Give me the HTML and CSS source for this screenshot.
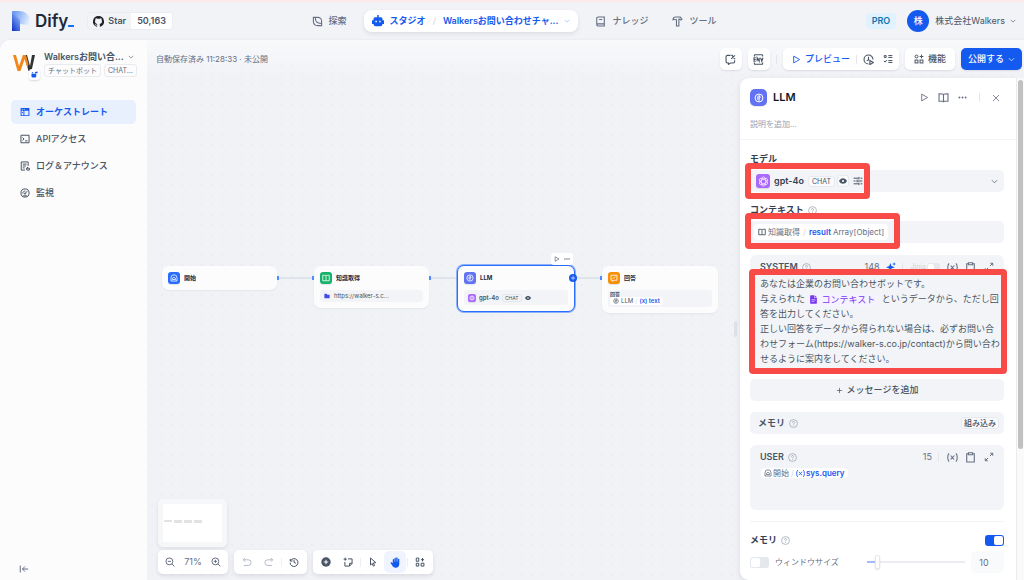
FILE: index.html
```html
<!DOCTYPE html>
<html lang="ja">
<head>
<meta charset="utf-8">
<meta name="viewport" content="width=device-width, initial-scale=1">
<title>Dify - ワークフロー</title>
<link rel="stylesheet" href="styles.css">
</head>
<body>
<svg class="sprite" aria-hidden="true">
  <defs>
    <linearGradient id="logo-a" x1="0" y1="1" x2="0.6" y2="0"><stop offset="0" stop-color="#0a2fc9"/><stop offset="1" stop-color="#8fb8f8"/></linearGradient>
    <linearGradient id="logo-b" x1="0" y1="0" x2="1" y2="0.4"><stop offset="0" stop-color="#5c8df2"/><stop offset="1" stop-color="#e3effc"/></linearGradient>
  </defs>
  <symbol id="i-chevron" viewBox="0 0 16 16"><path d="M2 5l6 6 6-6"/></symbol>
  <symbol id="i-explore" viewBox="0 0 16 16"><path d="M2 8V2h6.500A5.500 5.500 0 0 1 14 7.500V14H8.500A6.500 6.500 0 0 1 2 8zM5 2.500c-.5 5 2 8.500 8.500 8.500"/></symbol>
  <symbol id="i-robot" viewBox="0 0 16 16"><path fill="currentColor" stroke="none" fill-rule="evenodd" d="M7 0h2v3h3a2 2 0 0 1 2 2v2h2v5h-2a3 3 0 0 1-3 3H5a3 3 0 0 1-3-3H0V7h2V5a2 2 0 0 1 2-2h3zM4.500 7.500v2h2v-2zm5 0v2h2v-2z"/></symbol>
  <symbol id="i-mascot" viewBox="0 0 16 16"><path fill="currentColor" stroke="none" d="M1 6h11v6a3 3 0 0 1-3 3H4a3 3 0 0 1-3-3zM9 2l6-1v4H9zM2 3h3v2H2z"/></symbol>
  <symbol id="i-book" viewBox="0 0 16 16"><path d="M13.500 11.500V1.500h-9a2 2 0 0 0-2 2v9a2 2 0 0 0 2 2h9v-3h-9a2 2 0 0 0-2 1.500M6 5h4.500"/></symbol>
  <symbol id="i-hammer" viewBox="0 0 16 16"><path d="M1.500 5.500c0-2.500 1.500-4 4-4H12l2.500 3-1.500 1.500-2-1.500H10v10H6.500v-9c-1.500-.5-3.500-.5-5 0z"/></symbol>
  <symbol id="i-orchestrate" viewBox="0 0 16 16"><path fill="currentColor" stroke="none" fill-rule="evenodd" d="M1 1.500h14v13H1zm1.500 4.500v7h3v-7zm4.500 0v7h6.500v-7zM3 3v1.300h1.500V3zm3 0v1.300h1.500V3z"/><path d="M3 9h2"/></symbol>
  <symbol id="i-terminal" viewBox="0 0 16 16"><path d="M1.500 2h13v12h-13zM4 5.500L6.500 8 4 10.500M8 11h4"/></symbol>
  <symbol id="i-log" viewBox="0 0 16 16"><path d="M13 8V1.500H2v13h6M4.500 5h6M4.500 8h5M4.500 11h3M10 11.500h5v3h-4zM12 9.500v2"/></symbol>
  <symbol id="i-gauge" viewBox="0 0 16 16"><circle cx="8" cy="8" r="6.500"/><path d="M8 9l3.500-4M4.500 9a3.500 3.500 0 0 1 4-4M5 12.500h6"/><circle cx="8" cy="9" r="1"/></symbol>
  <symbol id="i-play" viewBox="0 0 16 16"><path d="M3 2l10.500 6L3 14z"/></symbol>
  <symbol id="i-chat-x" viewBox="0 0 16 16"><path d="M8 2H3.500a2 2 0 0 0-2 2v7a2 2 0 0 0 2 2H5v2l3-2h4a2 2 0 0 0 2-2V9M9 2h1.500l3 5H15M14.500 2L9 7"/></symbol>
  <symbol id="i-env" viewBox="0 0 16 16"><path d="M2 3.500V2a1 1 0 0 1 1-1h10a1 1 0 0 1 1 1v1.500M2 12.500V14a1 1 0 0 0 1 1h10a1 1 0 0 0 1-1v-1.500M4 5.500H1.500v5H4M1.500 8H4M6 10.500v-5l3 5v-5M11 5.500l1.800 5 1.700-5"/></symbol>
  <symbol id="i-runs" viewBox="0 0 16 16"><path d="M14.500 8A6.500 6.500 0 1 0 8 14.500M8 4v4.500L5.500 10M10 9.500l5 3-5 3z"/></symbol>
  <symbol id="i-checklist" viewBox="0 0 16 16"><path d="M2 2.500h3v3H2zM8.500 2.500H15M8.500 5.500H15M1.500 11l1.800 2L6 9.500M8.500 10.500H15M8.500 13.500H15"/></symbol>
  <symbol id="i-features" viewBox="0 0 16 16"><circle cx="4" cy="4" r="2.300"/><rect x="1.700" y="9.700" width="4.600" height="4.600"/><rect x="9.700" y="9.700" width="4.600" height="4.600"/><path d="M12 1v6M9 4h6"/></symbol>
  <symbol id="i-brain" viewBox="0 0 16 16"><circle cx="8" cy="8" r="6.300"/><path d="M8 3v10M6 5.500v5M8 5.500c3-.5 3 2.500 0 3"/></symbol>
  <symbol id="i-home" viewBox="0 0 16 16"><path d="M2 7.500a6 6 0 0 1 12 0V14H2zM5 11V8.500l3-2 3 2V11z"/></symbol>
  <symbol id="i-open-book" viewBox="0 0 16 16"><path d="M8 3.500c-1-1-2-1-6.500-1v11H7l1 .8 1-.8h5.500v-11C10 2.500 9 2.500 8 3.500zM8 3.500v10"/></symbol>
  <symbol id="i-answer" viewBox="0 0 16 16"><path d="M2 2.500h12v10H9l-4 2v-2H2zM5.500 10l5-5"/></symbol>
  <symbol id="i-dots" viewBox="0 0 16 16"><g fill="currentColor" stroke="none"><circle cx="2.500" cy="8" r="1.700"/><circle cx="8" cy="8" r="1.700"/><circle cx="13.500" cy="8" r="1.700"/></g></symbol>
  <symbol id="i-close" viewBox="0 0 16 16"><path d="M2 2l12 12M14 2L2 14"/></symbol>
  <symbol id="i-openai" viewBox="0 0 16 16"><g stroke-width="1"><ellipse cx="8" cy="8" rx="3.200" ry="6.700"/><ellipse cx="8" cy="8" rx="3.200" ry="6.700" transform="rotate(60 8 8)"/><ellipse cx="8" cy="8" rx="3.200" ry="6.700" transform="rotate(120 8 8)"/></g></symbol>
  <symbol id="i-eye" viewBox="0 0 16 16"><path fill="currentColor" stroke="none" fill-rule="evenodd" d="M0 8c2-4 5-5.500 8-5.500S14 4 16 8c-2 4-5 5.500-8 5.500S2 12 0 8zm8-2.200a2.200 2.200 0 1 0 0 4.400 2.200 2.200 0 0 0 0-4.400z"/></symbol>
  <symbol id="i-sliders" viewBox="0 0 16 16"><path d="M1 3.500h8M12 3.500h3M9.500 1.500v4M1 8h3M7 8h8M6.500 6v4M1 12.500h8M12 12.500h3M9.500 10.500v4"/></symbol>
  <symbol id="i-help" viewBox="0 0 16 16"><circle cx="8" cy="8" r="7"/><path d="M6 6.500a2 2 0 1 1 3 1.600c-.7.400-1 .7-1 1.400M8 11v1.200"/></symbol>
  <symbol id="i-sparkle" viewBox="0 0 16 16"><path fill="currentColor" stroke="none" d="M7 1.500l1.800 4.700L14 8.500l-5.200 1.800L7 15.500l-1.800-5.200L0 8.500l5.200-2.300zM13 0l.8 2.200L16 3l-2.200.8L13 6l-.8-2.200L10 3l2.200-.8z"/></symbol>
  <symbol id="i-var" viewBox="0 0 16 16"><path d="M3 2C.5 4.500.5 11.500 3 14M13 2c2.500 2.500 2.500 9.500 0 12M5 5.500c2.500 0 3 5 5.500 5M11 5.500c-2.500 0-3.500 5-6 5"/></symbol>
  <symbol id="i-clipboard" viewBox="0 0 16 16"><path d="M5 2.500H2.500v12h11v-12H11M5 1h6v3H5z"/></symbol>
  <symbol id="i-expand" viewBox="0 0 16 16"><path d="M9.500 6.500L14 2M10 2h4v4M6.500 9.500L2 14M2 10v4h4"/></symbol>
  <symbol id="i-file" viewBox="0 0 16 16"><path fill="currentColor" stroke="none" fill-rule="evenodd" d="M2 2a1.500 1.500 0 0 1 1.500-1.500H9V5h5v9a1.500 1.500 0 0 1-1.500 1.500h-9A1.500 1.500 0 0 1 2 14zm2.500 6v1.200h7V8zm0 3v1.200h5V11zM10 .5L14 4h-4z"/></symbol>
  <symbol id="i-folder" viewBox="0 0 16 16"><path fill="currentColor" stroke="none" d="M1 3a1 1 0 0 1 1-1h5l2 2.500h5a1 1 0 0 1 1 1V13a1 1 0 0 1-1 1H2a1 1 0 0 1-1-1z"/></symbol>
  <symbol id="i-zoom-out" viewBox="0 0 16 16"><circle cx="7" cy="7" r="5.500"/><path d="M11 11l4 4M4.500 7h5"/></symbol>
  <symbol id="i-zoom-in" viewBox="0 0 16 16"><circle cx="7" cy="7" r="5.500"/><path d="M11 11l4 4M4.500 7h5M7 4.500v5"/></symbol>
  <symbol id="i-undo" viewBox="0 0 16 16"><path d="M5 1.500L2 4.500l3 3M2 4.500h8a4.500 4.500 0 0 1 0 9H3"/></symbol>
  <symbol id="i-redo" viewBox="0 0 16 16"><path d="M11 1.500l3 3-3 3M14 4.500H6a4.500 4.500 0 0 0 0 9h7"/></symbol>
  <symbol id="i-history" viewBox="0 0 16 16"><path d="M2 3v3.500h3.500M2.300 6.200A6.300 6.300 0 1 1 1.700 9M8 4.500v4l3 1.500"/></symbol>
  <symbol id="i-add" viewBox="0 0 16 16"><circle cx="8" cy="8" r="7.500" fill="currentColor" stroke="none"/><path stroke="#fff" d="M8 4.500v7M4.500 8h7"/></symbol>
  <symbol id="i-note" viewBox="0 0 16 16"><path d="M8 3h6.500v7.500l-4 4H3V8M14.500 10h-4v4.500M3.500 1v5M1 3.500h5"/></symbol>
  <symbol id="i-pointer" viewBox="0 0 16 16"><path d="M4 1.500l8.500 7.500-4 .5 2 4.200-2 .8-1.900-4.200L4 13z"/></symbol>
  <symbol id="i-hand" viewBox="0 0 16 16"><path fill="currentColor" stroke="none" d="M4 9V4a1 1 0 0 1 2 0v3h.5V2a1 1 0 0 1 2 0v5H9V1.500a1 1 0 0 1 2 0V7h.5V3.500a1 1 0 0 1 2 0V10c0 3.500-2 5.500-5 5.500S4 14 3 12L1 9c-.5-1 .8-1.900 1.500-1.200z"/></symbol>
  <symbol id="i-organize" viewBox="0 0 16 16"><path d="M2 1.800h4v5H2zM2 10h4v4.500H2zM9.800 10h4.500v4.500H9.800zM12 1.500v5.500M9.500 4.300h5"/></symbol>
  <symbol id="i-collapse" viewBox="0 0 16 16"><path d="M2 2.500v11M14.500 8H5.500M9.500 4l-4 4 4 4"/></symbol>
  <symbol id="i-plus" viewBox="0 0 16 16"><path d="M8 2v12M2 8h12"/></symbol>
</svg>

<header class="topbar">
  <div class="brand-area">
    <a class="brand" href="#" aria-label="Dify">
      <svg class="brand-mark" viewBox="0 0 18 20"><path fill="url(#logo-b)" d="M0 0h8a10 10 0 0 1 0 20H8V10z"/><path fill="url(#logo-a)" d="M0 0l8 9v11H0z"/><path fill="#f1f3f7" d="M8 13l8 1-1 6H8z"/></svg>
      <span class="brand-name">Dify<span class="brand-cursor"></span></span>
    </a>
    <a class="github" href="#">
      <span class="github-star"><svg class="github-mark" viewBox="0 0 16 16"><path fill="currentColor" d="M8 0a8 8 0 0 0-2.500 15.600c.4.100.5-.2.500-.4v-1.400c-2.200.5-2.700-1-2.700-1-.4-.9-.9-1.200-.9-1.200-.7-.5.100-.5.100-.5.800.1 1.200.8 1.200.8.700 1.300 1.900.9 2.300.7.100-.5.300-.9.500-1.100-1.800-.2-3.600-.9-3.600-4 0-.9.300-1.600.8-2.100-.1-.2-.4-1 .1-2.100 0 0 .7-.2 2.200.8a7.500 7.500 0 0 1 4 0c1.500-1 2.200-.8 2.200-.8.400 1.100.2 1.900.1 2.100.5.600.8 1.300.8 2.100 0 3.100-1.900 3.800-3.700 4 .3.300.6.800.6 1.500v2.200c0 .2.100.5.500.4A8 8 0 0 0 8 0z"/></svg>Star</span><span class="github-count">50,163</span>
    </a>
  </div>
  <nav class="mainnav">
    <a class="nav-item" href="#"><svg class="icon s11"><use href="#i-explore"/></svg>探索</a>
    <div class="nav-pill">
      <a class="nav-current" href="#"><svg class="icon s12"><use href="#i-robot"/></svg>スタジオ</a>
      <span class="slash">/</span>
      <button class="nav-app" type="button">Walkersお問い合わせチャ...<svg class="icon s6 pale"><use href="#i-chevron"/></svg></button>
    </div>
    <a class="nav-item" href="#"><svg class="icon s11"><use href="#i-book"/></svg>ナレッジ</a>
    <a class="nav-item" href="#"><svg class="icon s11"><use href="#i-hammer"/></svg>ツール</a>
  </nav>
  <div class="account-area">
    <span class="plan">PRO</span>
    <button class="account" type="button"><span class="avatar">株</span>株式会社Walkers<svg class="icon s6"><use href="#i-chevron"/></svg></button>
  </div>
</header>

<div class="workspace">
  <aside class="sidebar">
    <div class="app">
      <div class="app-icon">
        <svg viewBox="0 0 22 18"><path fill="#333" d="M11 1h3l3 11 2-11h3l-3.500 16h-3z"/><path fill="#f0861c" d="M0 1h3l3 11 4-11h3L7.500 17h-3z"/><path fill="#f0861c" d="M10 1h3l2.500 9-1 4z"/></svg>
        <span class="app-badge"><svg class="icon s7"><use href="#i-mascot"/></svg></span>
      </div>
      <div class="app-info">
        <button class="app-name" type="button">Walkersお問い合...<svg class="icon s6"><use href="#i-chevron"/></svg></button>
        <div class="app-tags"><span class="tag">チャットボット</span><span class="tag">CHAT...</span></div>
      </div>
    </div>
    <nav class="menu">
      <a class="menu-item active" href="#"><svg class="icon s10"><use href="#i-orchestrate"/></svg>オーケストレート</a>
      <a class="menu-item" href="#"><svg class="icon s10"><use href="#i-terminal"/></svg>APIアクセス</a>
      <a class="menu-item" href="#"><svg class="icon s10"><use href="#i-log"/></svg>ログ＆アナウンス</a>
      <a class="menu-item" href="#"><svg class="icon s10"><use href="#i-gauge"/></svg>監視</a>
    </nav>
    <button class="collapse" type="button" aria-label="サイドバーを閉じる"><svg class="icon s10"><use href="#i-collapse"/></svg></button>
  </aside>

  <main class="canvas">
    <div class="flow">
      <svg class="edges" aria-hidden="true"><path d="M131 238h36M282 238h28M428 238h27"/><path class="ports" d="M131 236v4M166 236v4M283 236v4M454 236v4"/></svg>
      <section class="node node-start"><h3 class="node-title"><span class="chip blue"><svg class="icon s8"><use href="#i-home"/></svg></span>開始</h3></section>
      <section class="node node-knowledge"><h3 class="node-title"><span class="chip green"><svg class="icon s8"><use href="#i-open-book"/></svg></span>知識取得</h3>
        <div class="node-row"><svg class="icon s6 indigo"><use href="#i-folder"/></svg>https://walker-s.c...</div></section>
      <section class="node node-llm"><h3 class="node-title"><span class="chip violet"><svg class="icon s8"><use href="#i-brain"/></svg></span>LLM</h3>
        <div class="node-row model"><span class="chip mini purple"><svg class="icon s6"><use href="#i-openai"/></svg></span>gpt-4o<span class="mini-tag">CHAT</span><svg class="icon s6"><use href="#i-eye"/></svg></div></section>
      <section class="node node-answer"><h3 class="node-title"><span class="chip orange"><svg class="icon s8"><use href="#i-answer"/></svg></span>回答</h3>
        <div class="node-answer-row"><span>回答</span><span class="mini-var"><svg class="icon s6"><use href="#i-brain"/></svg>LLM<i>/</i><b>(x) text</b></span></div></section>
      <div class="node-actions"><svg class="icon s6"><use href="#i-play"/></svg><svg class="icon s6"><use href="#i-dots"/></svg></div>
      <button class="node-add" type="button" aria-label="追加"><svg class="icon s6"><use href="#i-plus"/></svg></button>
    </div>

    <div class="toolbar">
      <p class="save-state">自動保存済み 11:28:33 · 未公開</p>
      <button class="tool-btn square" type="button" aria-label="会話変数"><svg class="icon s11"><use href="#i-chat-x"/></svg></button>
      <button class="tool-btn square" type="button" aria-label="環境変数"><svg class="icon s11"><use href="#i-env"/></svg></button>
      <span class="rule"></span>
      <div class="tool-group">
        <button class="preview" type="button"><svg class="icon s9"><use href="#i-play"/></svg>プレビュー</button>
        <span class="rule"></span>
        <button class="plain" type="button" aria-label="実行履歴"><svg class="icon s11"><use href="#i-runs"/></svg></button>
        <button class="plain" type="button" aria-label="チェックリスト"><svg class="icon s10"><use href="#i-checklist"/></svg></button>
      </div>
      <button class="tool-btn" type="button"><svg class="icon s10"><use href="#i-features"/></svg>機能</button>
      <button class="publish" type="button">公開する<svg class="icon s7"><use href="#i-chevron"/></svg></button>
    </div>

    <div class="operator">
      <div class="minimap"><div class="minimap-view"><i class="thin"></i><i></i><i></i><i></i></div></div>
      <div class="controls">
        <div class="bar zoom"><button class="plain" type="button" aria-label="縮小"><svg class="icon s10"><use href="#i-zoom-out"/></svg></button><span>71%</span><button class="plain" type="button" aria-label="拡大"><svg class="icon s10"><use href="#i-zoom-in"/></svg></button></div>
        <div class="bar"><button class="cell faded" type="button" aria-label="元に戻す"><svg class="icon s10"><use href="#i-undo"/></svg></button><button class="cell faded" type="button" aria-label="やり直す"><svg class="icon s10"><use href="#i-redo"/></svg></button><span class="rule"></span><button class="cell" type="button" aria-label="変更履歴"><svg class="icon s10"><use href="#i-history"/></svg></button></div>
        <div class="bar"><button class="cell" type="button" aria-label="ノード追加"><svg class="icon s10"><use href="#i-add"/></svg></button><button class="cell" type="button" aria-label="メモ"><svg class="icon s10"><use href="#i-note"/></svg></button><span class="rule"></span><button class="cell" type="button" aria-label="ポインター"><svg class="icon s10"><use href="#i-pointer"/></svg></button><button class="cell on" type="button" aria-label="ハンド"><svg class="icon s11"><use href="#i-hand"/></svg></button><span class="rule"></span><button class="cell" type="button" aria-label="整理"><svg class="icon s10"><use href="#i-organize"/></svg></button></div>
      </div>
    </div>

    <span class="resize-handle"></span>
    <aside class="panel">
      <div class="panel-head">
        <div class="panel-title">
          <span class="chip big violet"><svg class="icon s10"><use href="#i-brain"/></svg></span>
          <h2>LLM</h2>
          <button class="plain" type="button" aria-label="実行"><svg class="icon s9"><use href="#i-play"/></svg></button>
          <button class="plain" type="button" aria-label="ドキュメント"><svg class="icon s11"><use href="#i-open-book"/></svg></button>
          <button class="plain" type="button" aria-label="その他"><svg class="icon s9"><use href="#i-dots"/></svg></button>
          <span class="rule"></span>
          <button class="plain" type="button" aria-label="閉じる"><svg class="icon s8"><use href="#i-close"/></svg></button>
        </div>
        <p class="panel-desc">説明を追加...</p>
      </div>
      <div class="panel-body">
        <h4 class="label">モデル</h4>
        <div class="field-wrap">
          <button class="field model-field" type="button">
            <span class="chip medium purple"><svg class="icon s11"><use href="#i-openai"/></svg></span><strong>gpt-4o</strong><span class="chat-tag">CHAT</span><span class="eye-tag"><svg class="icon s8"><use href="#i-eye"/></svg></span><svg class="icon s10"><use href="#i-sliders"/></svg><svg class="icon s7 end"><use href="#i-chevron"/></svg>
          </button>
          <span class="mark mark-model"></span>
        </div>
        <h4 class="label">コンテキスト<svg class="icon s9 help"><use href="#i-help"/></svg></h4>
        <div class="field-wrap">
          <div class="field"><span class="var"><svg class="icon s8 dark"><use href="#i-open-book"/></svg>知識取得<i>/</i><b>result</b>Array[Object]</span></div>
          <span class="mark mark-context"></span>
        </div>
        <div class="prompt system">
          <div class="prompt-head"><b>SYSTEM</b><svg class="icon s9 help"><use href="#i-help"/></svg><span class="count">148</span><svg class="icon s10 spark"><use href="#i-sparkle"/></svg><span class="rule"></span><label class="jinja">Jinja<input class="switch small" type="checkbox"></label><button class="plain" type="button" aria-label="変数"><svg class="icon s11"><use href="#i-var"/></svg></button><button class="plain" type="button" aria-label="コピー"><svg class="icon s11"><use href="#i-clipboard"/></svg></button><button class="plain" type="button" aria-label="拡大表示"><svg class="icon s10"><use href="#i-expand"/></svg></button></div>
          <p class="prompt-text">あなたは企業のお問い合わせボットです。<br>与えられた <span class="context-token"><svg class="icon s9"><use href="#i-file"/></svg>コンテキスト</span> というデータから、ただし回<br>答を出力してください。<br>正しい回答をデータから得られない場合は、必ずお問い合<br>わせフォーム(https://walker-s.co.jp/contact)から問い合わ<br>せるように案内をしてください。</p>
          <span class="mark mark-prompt"></span>
        </div>
        <button class="add-message" type="button"><svg class="icon s7"><use href="#i-plus"/></svg>メッセージを追加</button>
        <div class="field memory"><b>メモリ</b><svg class="icon s9 help"><use href="#i-help"/></svg><span class="builtin">組み込み</span></div>
        <div class="prompt user">
          <div class="prompt-head"><b>USER</b><svg class="icon s9 help"><use href="#i-help"/></svg><span class="count">15</span><span class="rule"></span><button class="plain" type="button" aria-label="変数"><svg class="icon s11"><use href="#i-var"/></svg></button><button class="plain" type="button" aria-label="コピー"><svg class="icon s11"><use href="#i-clipboard"/></svg></button><button class="plain" type="button" aria-label="拡大表示"><svg class="icon s10"><use href="#i-expand"/></svg></button></div>
          <span class="var query"><svg class="icon s8"><use href="#i-home"/></svg>開始<i>/</i><svg class="icon s9 blue-ink"><use href="#i-var"/></svg><b>sys.query</b></span>
        </div>
        <div class="memory-head"><label class="label" for="memory">メモリ</label><svg class="icon s9 help"><use href="#i-help"/></svg><input class="switch" id="memory" type="checkbox" checked></div>
        <div class="window-row"><input class="switch" id="window" type="checkbox"><label for="window">ウィンドウサイズ</label><input class="range" type="range" min="1" max="100" value="10" aria-label="ウィンドウサイズ"><input class="number" type="text" value="10" aria-label="ウィンドウサイズの値"></div>
      </div>
    </aside>
    <div class="scrolltrack"><span></span></div>
  </main>
</div>
</body>
</html>
```
FILE: styles.css
```css
* { box-sizing: border-box; }
body {
  margin: 0;
  height: 100vh;
  display: flex;
  flex-direction: column;
  overflow: hidden;
  background: #f1f3f7;
  color: #495464;
  font: 9px/12px Inter, "Noto Sans CJK JP", sans-serif;
}
h2, h3, h4, p { margin: 0; }
a { color: inherit; text-decoration: none; }
i { font-style: normal; }
button, input { font: inherit; color: inherit; }
button { border: 0; padding: 0; background: none; cursor: pointer; white-space: nowrap; }
b { font-weight: 600; }
.sprite { position: absolute; width: 0; height: 0; }

.icon { flex: none; display: block; fill: none; stroke: currentColor; stroke-width: 1.6; }
.s6 { width: 6px; height: 6px; }
.s7 { width: 7px; height: 7px; }
.s8 { width: 8px; height: 8px; }
.s9 { width: 9px; height: 9px; }
.s10 { width: 10px; height: 10px; }
.s11 { width: 11px; height: 11px; }
.s12 { width: 12px; height: 12px; }
.help { color: #98a2b3; margin-left: 4px; stroke-width: 1.3; }
.indigo { color: #444ce7; }
.dark { color: #354052; }
.blue-ink { color: #155aef; }
.rule { flex: none; width: 1px; height: 9px; background: #e3e6ec; }
.plain { display: flex; align-items: center; justify-content: center; }

/* Top bar */
.topbar {
  flex: none;
  height: 40px;
  border-top: 2px solid #fdeaea;
  padding: 0 8px 0 12px;
  display: grid;
  grid-template-columns: 1fr auto 1fr;
  align-items: center;
}
.brand-area, .brand, .github, .github-star, .nav-item, .nav-pill, .nav-current, .nav-app, .account-area, .account { display: flex; align-items: center; }
.brand-area { gap: 13px; }
.brand { gap: 5px; }
.brand-mark { width: 18px; height: 20px; }
.brand-name { display: flex; align-items: baseline; font-size: 17px; line-height: 20px; font-weight: 600; color: #1d2939; }
.brand-cursor { width: 6px; height: 2px; background: #1570ef; }
.github { height: 18px; border: 1px solid #e9ecf1; border-radius: 4px; font-weight: 600; overflow: hidden; }
.github-star { gap: 4px; padding: 0 5px; }
.github-mark { width: 11px; height: 11px; color: #1f2328; }
.github-count { background: #fff; padding: 2px 6px; }
.mainnav { display: flex; align-items: center; gap: 10px; color: #676f83; font-weight: 500; }
.nav-item { gap: 6px; padding: 0 7px; }
.nav-pill { height: 22px; gap: 7px; padding: 0 8px; border-radius: 8px; background: #fff; box-shadow: 0 2px 4px #10182818; color: #155aef; font-weight: 600; }
.nav-current, .nav-app { gap: 6px; }
.slash { color: #d0d5dd; font-weight: 400; }
.pale { color: #84adff; }
.account-area { justify-content: flex-end; gap: 11px; }
.plan { padding: 2px 6px; border-radius: 4px; background: #e0f2fe; color: #1273ad; font-weight: 600; }
.account { gap: 5px; }
.avatar { width: 22px; height: 22px; margin-right: 1px; border-radius: 50%; background: #155aef; color: #fff; display: grid; place-items: center; font-weight: 500; }

/* Workspace */
.workspace { flex: 1; min-height: 0; display: grid; grid-template-columns: 147px minmax(0, 1fr); border-top-left-radius: 10px; overflow: hidden; box-shadow: 0 0 3px #10182810; }
.sidebar { background: #fcfcfd; display: flex; flex-direction: column; padding: 11px; }
.app { display: flex; gap: 7px; height: 28px; }
.app-icon { position: relative; width: 26px; height: 24px; padding: 3px 2px; }
.app-icon > svg { display: block; width: 22px; height: 18px; }
.app-badge { position: absolute; right: -3px; bottom: -5px; padding: 2px; border-radius: 3px; background: #fff; color: #155aef; box-shadow: 0 1px 2px #10182826; }
.app-name { display: flex; align-items: center; gap: 4px; line-height: 12px; font-weight: 600; }
.app-tags { display: flex; gap: 3px; margin-top: 1px; }
.tag { height: 13px; padding: 0 3px; border: 1px solid #e9ebf0; border-radius: 3px; font-size: 7px; line-height: 11px; color: #676f83; white-space: nowrap; }
.menu { display: flex; flex-direction: column; gap: 3px; margin-top: 21px; }
.menu-item { display: flex; align-items: center; gap: 6px; height: 24px; padding: 0 9px; border-radius: 5px; font-weight: 500; }
.menu-item.active { background: #e8effd; color: #155aef; font-weight: 600; }
.collapse { margin: auto 0 -5px 8px; align-self: flex-start; color: #676f83; }

/* Canvas */
.canvas { position: relative; background: radial-gradient(circle, #e5e8ee 0.5px, transparent 1px) 0 0 / 10px 10px #f0f2f6; min-width: 0; }
.toolbar { position: relative; display: flex; align-items: center; gap: 6px; padding: 8px 2px 8px 9px; background: linear-gradient(#f7f9fb, #f1f3f700); }
.save-state { margin-right: auto; font-size: 8px; color: #676f83; }
.tool-btn, .tool-group, .publish { height: 22px; border-radius: 5px; background: #fff; box-shadow: 0 1px 2px #1018281a; display: flex; align-items: center; font-weight: 500; }
.tool-btn { padding: 0 9px; gap: 4px; }
.square { width: 22px; padding: 0; justify-content: center; }
.tool-group { padding: 0 6px 0 9px; gap: 6px; }
.tool-group .plain + .plain { margin-left: 3px; }
.preview { display: flex; align-items: center; gap: 4px; color: #155aef; }
.publish { padding: 0 7px; gap: 4px; background: #155aef; color: #fff; }

.flow { position: absolute; inset: 0; }
.edges { position: absolute; width: 100%; height: 100%; fill: none; stroke: #d0d5dd; }
.edges .ports { stroke: #528bff; stroke-width: 2; }
.node { position: absolute; width: 115px; padding: 6px; border-radius: 7px; background: #fcfcfd; box-shadow: 0 1px 2px #1018280d; font-size: 6px; line-height: 8px; }
.node-start { left: 15px; top: 226px; }
.node-knowledge { left: 167px; top: 226px; }
.node-llm { left: 310px; top: 225px; width: 118px; border: 1px solid #296dff; box-shadow: 0 0 0 1px #296dff80; }
.node-answer { left: 455px; top: 226px; width: 116px; }
.node-title { display: flex; align-items: center; gap: 4px; font-size: 6px; font-weight: 700; color: #1d2939; }
.chip { flex: none; display: grid; place-items: center; width: 12px; height: 12px; border-radius: 3px; color: #fff; box-shadow: 0 1px 1px #1018281a; }
.mini { width: 8px; height: 8px; border-radius: 2px; }
.medium { width: 14px; height: 14px; }
.big { width: 17px; height: 17px; border-radius: 5px; }
.blue { background: #296dff; }
.green { background: #17b26a; }
.violet { background: #6172f3; }
.orange { background: #f79009; }
.purple { background: #ab68ff; }
.node-row { display: flex; align-items: center; gap: 4px; height: 12px; margin-top: 6px; padding: 0 4px; border-radius: 3px; background: #f2f4f7; }
.node-row.model { height: 15px; gap: 3px; font-weight: 600; }
.mini-tag { padding: 0 2px; border: 1px solid #e4e7ec; border-radius: 2px; font-size: 5px; line-height: 6px; font-weight: 400; }
.node-answer-row { display: flex; flex-direction: column; align-items: flex-start; margin-top: 6px; padding: 1px 2px 2px; border-radius: 3px; background: #f2f4f7; font-size: 5px; line-height: 6px; font-weight: 600; }
.mini-var { display: flex; align-items: center; gap: 2px; padding: 0 3px; border-radius: 2px; background: #fff; font-size: 6px; line-height: 8px; font-weight: 400; }
.mini-var b { color: #155aef; }
.mini-var i { color: #d0d5dd; }
.node-actions { position: absolute; left: 404px; top: 213px; display: flex; gap: 4px; padding: 3px; border-radius: 3px; background: #fff; }
.node-add { position: absolute; left: 422px; top: 234px; width: 8px; height: 8px; border-radius: 50%; background: #155aef; color: #fff; display: grid; place-items: center; }

.operator { position: absolute; left: 11px; bottom: 6px; display: flex; flex-direction: column; align-items: flex-start; gap: 3px; }
.minimap { width: 69px; height: 48px; padding: 5px; border-radius: 5px; background: #f6f7f8; box-shadow: 0 2px 4px #10182814; }
.minimap-view { height: 38px; padding: 16px 1px; background: #fff; display: flex; gap: 2px; }
.minimap-view i { width: 8px; height: 3px; background: #e2e2e2; }
.minimap-view .thin { height: 2px; }
.controls { display: flex; gap: 6px; }
.bar { height: 24px; padding: 0 2px; border-radius: 5px; background: #fff; box-shadow: 0 2px 4px #10182818; display: flex; align-items: center; color: #676f83; }
.zoom { width: 70px; padding: 0 7px; justify-content: space-between; }
.cell { width: 22px; height: 22px; border-radius: 5px; display: grid; place-items: center; color: #495464; }
.bar .rule { margin: 0 1px; background: #eceef2; }
.faded { color: #b4bac5; }
.on { background: #eff4ff; color: #155aef; }

/* Settings panel */
.resize-handle { position: absolute; right: 287px; top: 281px; width: 3px; height: 16px; border-radius: 2px; background: #dfe2e8; }
.panel { position: absolute; right: 8px; top: 38px; bottom: 0; width: 276px; border-radius: 9px 0 0 9px; background: #fff; box-shadow: 0 2px 6px #10182818; overflow: hidden; white-space: nowrap; }
.panel-head { padding: 11px 16px 9px 10px; border-bottom: 1px solid #f2f4f7; }
.panel-title { display: flex; align-items: center; gap: 9px; color: #676f83; }
.panel-title h2 { margin: 0 auto 0 -3px; font-size: 11px; line-height: 17px; font-weight: 600; color: #101828; }
.panel-title .rule { margin: 0 3px; }
.panel-desc { margin-top: 12px; font-size: 8px; color: #98a2b3; }
.panel-body { padding: 13px 12px 8px 10px; display: flex; flex-direction: column; }
.label { display: flex; align-items: center; height: 12px; font-weight: 600; color: #354052; }
.field-wrap { position: relative; margin: 5px 0 12px; }
.field { width: 100%; height: 22px; padding: 0 6px; border-radius: 5px; background: #f2f4f7; display: flex; align-items: center; }
.model-field { gap: 4px; }
.model-field strong { font-weight: 600; color: #354052; }
.chat-tag, .eye-tag, .builtin { border: 1px solid #e6e9ee; border-radius: 3px; background: #f9fafb; }
.chat-tag { padding: 0 3px; font-size: 7px; line-height: 9px; }
.eye-tag { padding: 1px; margin-left: -2px; }
.end { margin-left: auto; }
.mark { position: absolute; border: 6px solid #f84a46; border-radius: 4px; pointer-events: none; }
.mark-model { left: -5px; top: -7px; width: 125px; height: 36px; }
.mark-context { left: -5px; top: -8px; width: 155px; height: 36px; }
.mark-prompt { left: -1px; top: 14px; right: -3px; height: 105px; }
.var { display: flex; align-items: center; gap: 2px; padding: 2px 4px; border-radius: 4px; background: #fff; font-size: 8px; color: #676f83; }
.var i { color: #d0d5dd; margin: 0 1px; }
.var b { color: #155aef; }
.field > .var { margin-left: -2px; }
.prompt { position: relative; border-radius: 6px; background: #f2f4f7; padding: 6px 10px; }
.system { height: 119px; }
.prompt-head { display: flex; align-items: center; height: 12px; color: #676f83; }
.prompt-head b { color: #495464; }
.prompt-head .count { margin-left: auto; }
.prompt-head .rule { margin: 0 8px 0 6px; }
.prompt-head .plain { width: 11px; margin-left: 7px; }
.prompt-head .rule + .plain { margin-left: 0; }
.spark { margin-left: 6px; color: #155aef; }
.jinja { display: flex; align-items: center; gap: 1px; font-size: 7px; color: #cfd4dc; }
.prompt-text { margin-top: 3px; line-height: 15px; }
.context-token { display: inline-flex; align-items: center; gap: 4px; padding: 0 4px 0 1px; height: 12px; border-radius: 3px; background: #f5f3ff; color: #7839ee; line-height: 12px; vertical-align: middle; }
.add-message { display: flex; align-items: center; justify-content: center; gap: 4px; height: 22px; margin: 5px 0 11px; border-radius: 5px; background: #f2f4f7; font-weight: 500; }
.memory { padding: 0 5px 0 8px; }
.builtin { margin-left: auto; padding: 0 2px; font-size: 8px; line-height: 10px; font-weight: 500; }
.user { height: 65px; margin-top: 11px; }
.query { width: max-content; margin: 5px 0 0 1px; padding: 0 3px; line-height: 10px; gap: 1px; }
.memory-head { display: flex; align-items: center; margin-top: 11px; padding-top: 12px; border-top: 1px solid #f2f4f7; }
.switch { appearance: none; flex: none; width: 19px; height: 11px; margin: 0; padding: 1px; border-radius: 3px; background: #e4e7ec; display: flex; }
.switch::before { content: ""; width: 9px; height: 9px; border-radius: 2px; background: #fff; }
.switch:checked { background: #155aef; justify-content: flex-end; }
.switch.small { width: 13px; height: 8px; }
.switch.small::before { width: 6px; height: 6px; }
.memory-head .switch { margin-left: auto; }
.window-row { display: flex; align-items: center; margin-top: 5px; font-size: 8px; color: #676f83; }
.window-row label { margin: 0 auto 0 6px; }
.range { appearance: none; width: 98px; height: 14px; margin: 0 6px; background: linear-gradient(90deg, #a4bcfd 10%, #eaecf0 10%) center / 100% 2px no-repeat; }
.range::-webkit-slider-thumb { appearance: none; width: 5px; height: 14px; border-radius: 2px; border: 1px solid #e4e7ec; background: #fff; box-shadow: 0 1px 2px #10182820; }
.number { width: 33px; height: 22px; padding: 0 7px 0 0; border: 0; border-radius: 5px; background: #f9fafb; font-size: 9px; text-align: center; }
.scrolltrack { position: absolute; right: 0; top: 38px; bottom: 0; width: 8px; padding: 2px 1px; background: #fafafa; border-left: 1px solid #ececec; }
.scrolltrack span { display: block; height: 74%; border-radius: 3px; background: #c1c1c1; }
```
